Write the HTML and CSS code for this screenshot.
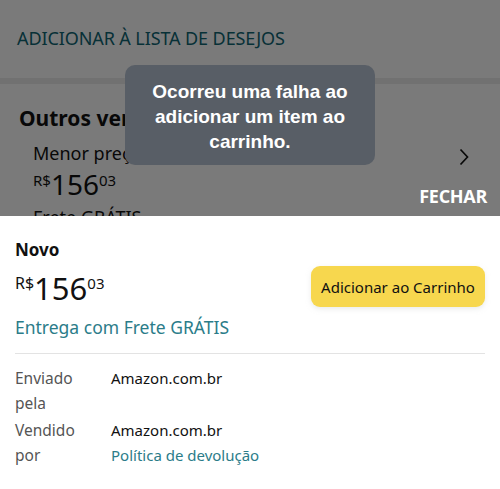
FILE: index.html
```html
<!DOCTYPE html>
<html lang="pt-BR">
<head>
    <meta charset="UTF-8">
    <meta name="viewport" content="width=device-width, initial-scale=1.0">
    <title>Ofertas</title>
    <link rel="stylesheet" href="styles.css">
</head>
<body>
    <div class="screen">
        <!-- página por trás do modal -->
        <div class="page">
            <div class="wishlist">ADICIONAR À LISTA DE DESEJOS</div>
            <div class="band"></div>
            <div class="others">
                <h2>Outros vendedores na Amazon</h2>
                <div class="others-row">
                    <div>
                        <div class="others-label">Menor preço</div>
                        <div class="price price-small"><span class="cur">R$</span><span class="int">156</span><span class="cents">03</span></div>
                        <div class="others-label">Frete GRÁTIS</div>
                    </div>
                    <svg class="chevron" width="12" height="18" viewBox="0 0 12 18"><path d="M2.5 1.5 L9.5 9 L2.5 16.5" fill="none" stroke="#111" stroke-width="1.7"/></svg>
                </div>
            </div>
        </div>

        <div class="scrim"></div>

        <div class="toast">Ocorreu uma falha ao adicionar um item ao carrinho.</div>

        <div class="modal">
            <div class="close-row"><span class="close">FECHAR</span></div>
            <div class="sheet">
                <div class="offer">
                    <div class="offer-info">
                        <div class="condition">Novo</div>
                        <div class="price"><span class="cur">R$</span><span class="int">156</span><span class="cents">03</span></div>
                        <a class="link delivery">Entrega com Frete GRÁTIS</a>
                    </div>
                    <button class="add-btn">Adicionar ao Carrinho</button>
                </div>
                <div class="details">
                    <div class="label">Enviado pela</div>
                    <div class="value">Amazon.com.br</div>
                    <div class="label">Vendido por</div>
                    <div class="value">Amazon.com.br<br><a class="link">Política de devolução</a></div>
                </div>
            </div>
        </div>
    </div>
</body>
</html>
```

FILE: styles.css
```css
body {
    margin: 0;
    font-family: 'Noto Sans', Arial, sans-serif;
    color: #111;
    background-color: #fff;
}
.screen {
    position: relative;
    width: 500px;
    height: 489px;
    overflow: hidden;
}
.page {
    background-color: #fff;
}
.wishlist {
    padding: 26px 17px 0;
    height: 52px;
    font-size: 18px;
    color: #0f6674;
    letter-spacing: -0.1px;
}
.band {
    height: 6px;
    background-color: #ececec;
}
.others {
    padding: 20px 19px 0;
}
.others h2 {
    margin: 0;
    font-size: 21px;
    font-weight: bold;
    line-height: 28px;
    white-space: nowrap;
}
.others-row {
    display: flex;
    justify-content: space-between;
    align-items: flex-start;
    padding: 8px 11px 0 14px;
}
.others-label {
    font-size: 18px;
    line-height: 26px;
}
.chevron {
    margin-top: 8px;
}
.price {
    display: flex;
    align-items: flex-start;
    line-height: 1;
}
.price .cur {
    font-size: 16px;
    margin-top: 2px;
}
.price .int {
    font-size: 31px;
}
.price .cents {
    font-size: 15px;
    margin-top: 3px;
}
.price-small {
    margin: 4px 0 6px;
}
.price-small .cur {
    font-size: 15px;
    margin-top: 3px;
}
.price-small .int {
    font-size: 28px;
}
.scrim {
    position: absolute;
    inset: 0;
    background-color: rgba(0, 0, 0, 0.52);
}
.toast {
    position: absolute;
    left: 125px;
    top: 65px;
    width: 250px;
    height: 100px;
    box-sizing: border-box;
    padding: 14px 16px;
    border-radius: 10px;
    background-color: #585e66;
    color: #fff;
    font-family: 'Liberation Sans', Arial, sans-serif;
    font-weight: bold;
    font-size: 19px;
    line-height: 25px;
    text-align: center;
}
.modal {
    position: absolute;
    inset: 0;
    display: flex;
    flex-direction: column;
    justify-content: flex-end;
}
.close-row {
    display: flex;
    justify-content: flex-end;
    padding: 0 13px 8px;
}
.close {
    color: #fff;
    font-family: 'Open Sans', Arial, sans-serif;
    font-weight: bold;
    font-size: 18px;
    letter-spacing: -0.3px;
}
.sheet {
    height: 273px;
    box-sizing: border-box;
    background-color: #fff;
    padding: 22px 15px 0;
}
.offer {
    display: flex;
    justify-content: space-between;
    align-items: center;
    padding-bottom: 14px;
    border-bottom: 1px solid #e3e3e3;
}
.condition {
    font-weight: bold;
    font-size: 17px;
    line-height: 24px;
    margin-bottom: 11px;
}
.link {
    color: #2b7c89;
}
.delivery {
    display: block;
    margin-top: 11px;
    font-size: 17.5px;
    line-height: 24px;
}
.add-btn {
    width: 174px;
    height: 41px;
    margin-top: -4px;
    border: none;
    border-radius: 9px;
    background-color: #f7d74e;
    box-shadow: 0 2px 5px rgba(213, 217, 217, 0.5);
    font-family: 'Noto Sans', Arial, sans-serif;
    font-size: 15px;
    color: #111;
    padding: 0;
}
.details {
    display: grid;
    grid-template-columns: 96px 1fr;
    row-gap: 2px;
    padding-top: 12px;
    font-size: 15px;
    line-height: 25px;
}
.details .label {
    color: #555;
    width: 64px;
    font-size: 15.5px;
}
```
